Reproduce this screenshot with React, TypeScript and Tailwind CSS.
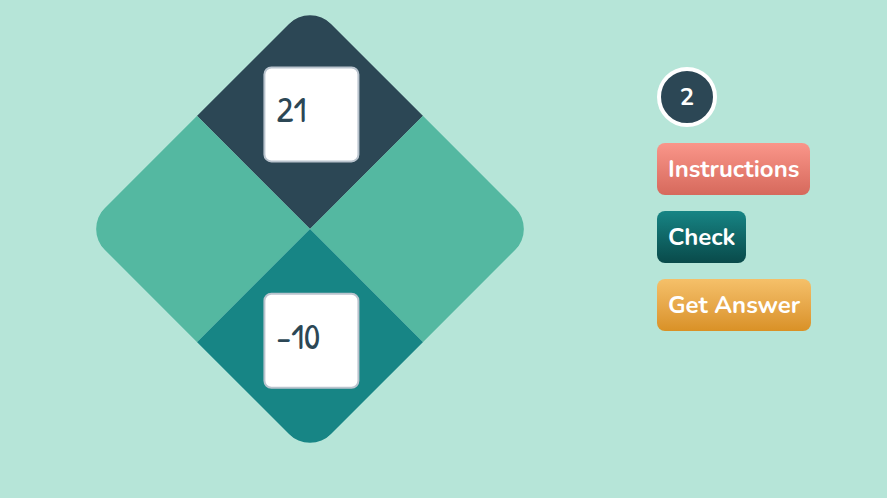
import { useState } from 'react';

const inputClass =
  "size-24 -rotate-45 rounded-lg border-2 border-[#bac4ce] bg-white pl-[11px] pb-3 font-['Patrick_Hand','Roboto_Condensed','Roboto',sans-serif] text-4xl font-normal text-[#2c4755] outline-none";
const buttonClass = 'h-13 cursor-pointer rounded-lg bg-linear-to-b px-[11px]';

export default function App() {
  const [product, setProduct] = useState('21');
  const [sum, setSum] = useState('-10');

  return (
    <main className="flex min-h-screen bg-[#b6e5d8] font-['Nunito','Lato',sans-serif]">
      <section className="flex w-[70%] items-start justify-center pt-[69px]">
        <div className="grid size-80 rotate-45 grid-cols-2 grid-rows-2 overflow-hidden rounded-[30px]">
          <div className="flex items-center justify-center bg-[#2c4755] pb-1">
            <input aria-label="Top number" className={inputClass} value={product} onChange={(e) => setProduct(e.target.value)} />
          </div>
          <div className="bg-[#54b8a1]" />
          <div className="bg-[#54b8a1]" />
          <div className="flex items-center justify-center bg-[#178585] pb-1">
            <input aria-label="Bottom number" className={inputClass} value={sum} onChange={(e) => setSum(e.target.value)} />
          </div>
        </div>
      </section>
      <aside className="flex flex-1 flex-col items-start gap-4 pt-[67px] pl-9 text-2xl font-bold whitespace-nowrap text-white">
        <div className="flex size-15 items-center justify-center rounded-full border-4 border-white bg-[#2c4755]">2</div>
        <button type="button" className={`${buttonClass} from-[#fa968a] to-[#d6695c]`}>Instructions</button>
        <button type="button" className={`${buttonClass} from-[#178585] to-[#094a4a]`}>Check</button>
        <button type="button" className={`${buttonClass} from-[#f5c069] to-[#d99125]`}>Get Answer</button>
      </aside>
    </main>
  );
}
